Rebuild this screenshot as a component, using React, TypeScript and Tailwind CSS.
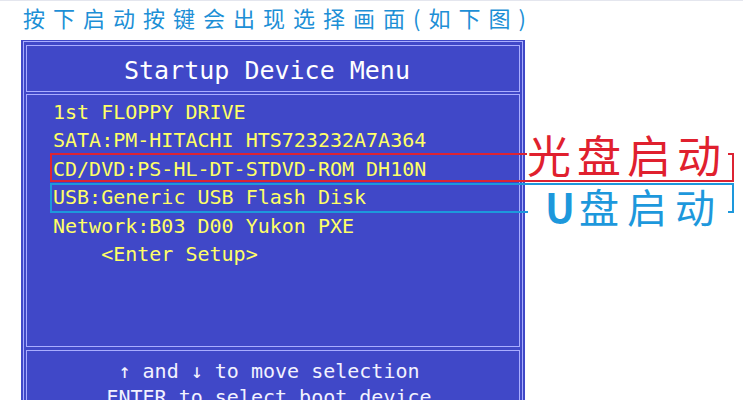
const items = [
  "1st FLOPPY DRIVE",
  "SATA:PM-HITACHI HTS723232A7A364",
  "CD/DVD:PS-HL-DT-STDVD-ROM DH10N",
  "USB:Generic USB Flash Disk",
  "Network:B03 D00 Yukon PXE",
  "    <Enter Setup>",
];

const App = () => {
  return (
    <div className="relative w-[743px] h-[400px] overflow-hidden bg-white border-t border-[#e4e6ee]">
      <div className="pl-[23px] pt-[5px] text-[22px] leading-[22px] tracking-[8px] text-[#1d8fd6] font-['Noto_Sans_CJK_SC',sans-serif] whitespace-nowrap">
        按下启动按键会出现选择画面(如下图)
      </div>

      {/* bios panel */}
      <div className="ml-[21px] mt-[12px] w-[504px] h-[400px] bg-[#4048c8] px-[2px] pt-[1px] font-['DejaVu_Sans_Mono',monospace]">
        <div className="flex flex-col h-full border border-[#a9adff] px-[2px] pt-[3px]">
          <div className="h-[47px] border border-[#a9adff] pt-[12px] pr-[12px] text-center text-[25px] leading-none text-white">
            Startup Device Menu
          </div>
          <div className="mt-[2px] h-[253px] border border-[#a9adff] pl-[26px] pt-[3px] text-[20px] leading-[28.4px] text-[#ffff66]">
            {items.map((item, index) => (
              <div key={index} className="whitespace-pre">
                {item}
              </div>
            ))}
          </div>
          <div className="mt-[3px] flex-1 border border-[#a9adff] pt-[7px] pr-[8px] text-center text-[20px] leading-[26px] text-[#f2f2ff]">
            <div>↑ and ↓ to move selection</div>
            <div>ENTER to select boot device</div>
          </div>
        </div>
      </div>

      {/* annotations */}
      <div className="absolute left-[50px] top-[152px] w-[684px] h-[29px] border-2 border-[#dc2433]" />
      <div className="absolute left-[50px] top-[182px] w-[684px] h-[30px] border-2 border-[#1d98dc]" />
      <div className="absolute left-[527px] top-[128px] h-[50px] w-[201px] bg-white text-[44px] leading-[50px] tracking-[6px] text-[#e0202e] font-['Noto_Sans_CJK_SC',sans-serif] whitespace-nowrap">
        光盘启动
      </div>
      <div className="absolute left-[528px] top-[185px] h-[40px] w-[200px] bg-white pl-[17px] text-[40px] leading-[40px] tracking-[8px] text-[#1d98dc] font-['Noto_Sans_CJK_SC',sans-serif] whitespace-nowrap">
        <span className="font-bold tracking-[4px]">U</span>盘启动
      </div>
    </div>
  );
};

export default App;
